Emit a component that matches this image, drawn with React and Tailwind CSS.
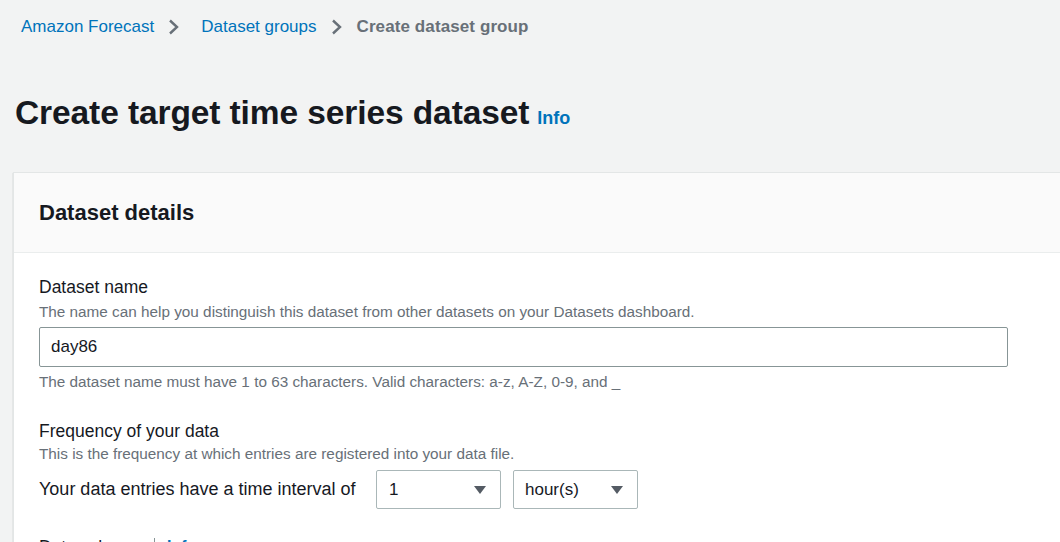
export default function App() {
  const font = { fontFamily: '"Liberation Sans", Arial, sans-serif' };
  const Chevron = ({ cls }) => (
    <svg width="13" height="16" viewBox="0 0 13 16" className={cls}>
      <path d="M3 1.5 L10 8 L3 14.5" fill="none" stroke="#687078" strokeWidth="2.4" />
    </svg>
  );
  const Caret = () => (
    <svg width="14" height="10" viewBox="0 0 14 10">
      <path d="M1 1 H13 L7 9 Z" fill="#545b64" />
    </svg>
  );
  return (
    <div className="w-[1060px] h-[542px] overflow-hidden bg-[#f2f3f3] text-[#16191f]" style={font}>
      <nav className="flex items-center pl-[21px] pt-[15px] h-[23px] box-content text-[17px]">
        <span className="text-[#0073bb]">Amazon Forecast</span>
        <Chevron cls="ml-[13px] mr-[21px]" />
        <span className="text-[#0073bb]">Dataset groups</span>
        <Chevron cls="ml-[13px] mr-[14px]" />
        <span className="text-[#687078] font-bold tracking-[0.1px]">Create dataset group</span>
      </nav>
      <div className="flex items-baseline pl-[15px] mt-[55px] leading-[40px]">
        <h1 className="text-[33.5px] font-bold tracking-[-0.1px]">Create target time series dataset</h1>
        <span className="ml-[8px] text-[18px] font-bold text-[#0073bb]">Info</span>
      </div>
      <div className="ml-[13px] mt-[34px] w-[1100px] bg-white border-l border-t border-[#e3e6e6] shadow-[0_1px_1px_0_rgba(0,28,36,0.3)]">
        <div className="h-[80px] bg-[#fafafa] border-b border-[#eaeded] flex items-center pl-[25px]">
          <h2 className="text-[22px] font-bold">Dataset details</h2>
        </div>
        <div className="pl-[25px] pt-[22px]">
          <div className="text-[17.5px] leading-[24px]">Dataset name</div>
          <div className="text-[15.3px] leading-[20px] text-[#687078] mt-[3px]">
            The name can help you distinguish this dataset from other datasets on your Datasets dashboard.
          </div>
          <div className="mt-[5px] w-[969px] h-[40px] border border-[#879596] rounded-[2px] flex items-center pl-[11px] text-[17px]">
            day86
          </div>
          <div className="text-[15.3px] leading-[20px] text-[#687078] mt-[5px]">
            The dataset name must have 1 to 63 characters. Valid characters: a-z, A-Z, 0-9, and _
          </div>
          <div className="text-[17.5px] leading-[24px] mt-[27px]">Frequency of your data</div>
          <div className="text-[15.3px] leading-[20px] text-[#687078] mt-[1px]">
            This is the frequency at which entries are registered into your data file.
          </div>
          <div className="flex items-center mt-[6px]">
            <span className="text-[18px] w-[337px]">Your data entries have a time interval of</span>
            <div className="w-[125px] h-[39px] border border-[#aab7b8] rounded-[2px] flex items-center justify-between pl-[12px] pr-[13px] text-[17px]">
              <span>1</span>
              <Caret />
            </div>
            <div className="ml-[12px] w-[125px] h-[39px] border border-[#aab7b8] rounded-[2px] flex items-center justify-between pl-[11px] pr-[13px] text-[17px]">
              <span>hour(s)</span>
              <Caret />
            </div>
          </div>
          <div className="flex items-center mt-[27px] text-[17.5px] leading-[22px]">
            <span>Data schema</span>
            <span className="mx-[12px] h-[18px] border-l border-[#879596]"></span>
            <span className="text-[#0073bb] font-bold text-[16px]">Info</span>
          </div>
        </div>
      </div>
    </div>
  );
}
